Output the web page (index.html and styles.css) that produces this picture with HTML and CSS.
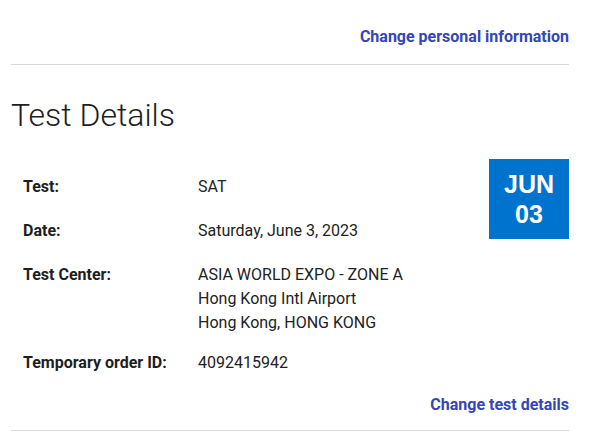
FILE: index.html
```html
<!DOCTYPE html>
<html>
<head>
<meta charset="utf-8">
<link rel="stylesheet" href="styles.css">
</head>
<body>
<div class="page">
  <div class="top-link-row">
    <a class="action-link" href="#">Change personal information</a>
  </div>
  <h1 class="section-title">Test Details</h1>
  <div class="details">
    <dl class="detail-list">
      <div class="detail-row">
        <dt>Test:</dt>
        <dd>SAT</dd>
      </div>
      <div class="detail-row">
        <dt>Date:</dt>
        <dd>Saturday, June 3, 2023</dd>
      </div>
      <div class="detail-row">
        <dt>Test Center:</dt>
        <dd>ASIA WORLD EXPO - ZONE A<br>Hong Kong Intl Airport<br>Hong Kong, HONG KONG</dd>
      </div>
      <div class="detail-row detail-row-last">
        <dt>Temporary order ID:</dt>
        <dd>4092415942</dd>
      </div>
    </dl>
    <div class="date-badge">
      <span>JUN</span>
      <span>03</span>
    </div>
  </div>
  <div class="bottom-link-row">
    <a class="action-link" href="#">Change test details</a>
  </div>
</div>
</body>
</html>
```

FILE: styles.css
```css
* { box-sizing: border-box; }
body {
  margin: 0;
  background: #ffffff;
  font-family: Roboto, "Liberation Sans", Arial, sans-serif;
  color: #1e1e1e;
}
.page {
  width: 558px;
  margin-left: 11px;
}
.top-link-row {
  display: flex;
  justify-content: flex-end;
  padding-top: 27px;
  padding-bottom: 17px;
  border-bottom: 1px solid #d9d9d9;
}
.action-link {
  font-size: 16px;
  font-weight: 700;
  color: #3546b5;
  text-decoration: none;
  line-height: 20px;
}
.section-title {
  margin: 30px 0 0 0;
  font-size: 32px;
  font-weight: 300;
  line-height: 40px;
  color: #1e1e1e;
}
.details {
  display: flex;
  justify-content: space-between;
  align-items: flex-start;
  margin-top: 24px;
}
.detail-list {
  margin: 0;
  padding: 6px 0 0 12px;
}
.detail-row {
  display: flex;
  padding: 10px 0;
  font-size: 16px;
  line-height: 24px;
}
.detail-row-last {
  padding-top: 6px;
}
.detail-row dt {
  width: 175px;
  font-weight: 700;
}
.detail-row dd {
  margin: 0;
  color: #222222;
}
.date-badge {
  width: 80px;
  height: 80px;
  background: #0073cf;
  color: #ffffff;
  display: flex;
  flex-direction: column;
  align-items: center;
  justify-content: center;
  font-family: "Liberation Sans", Arial, sans-serif;
  font-weight: 700;
  font-size: 25px;
  line-height: 30px;
}
.bottom-link-row {
  display: flex;
  justify-content: flex-end;
  padding-top: 10px;
  padding-bottom: 15px;
  border-bottom: 1px solid #d9d9d9;
}
```
